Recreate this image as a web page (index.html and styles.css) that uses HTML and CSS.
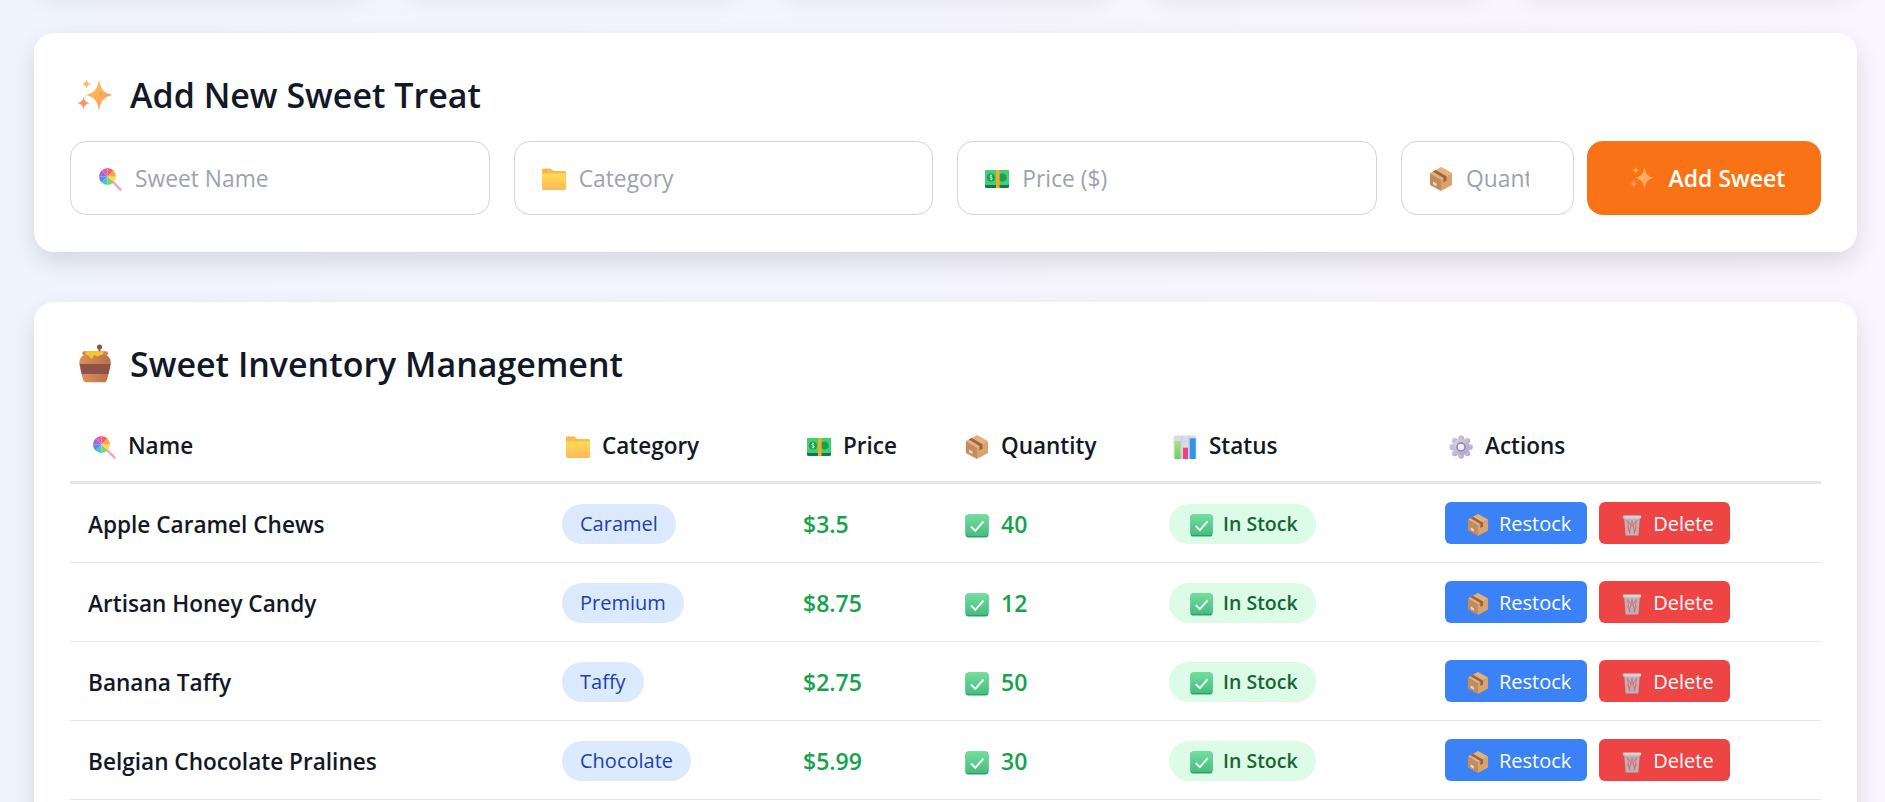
FILE: index.html
```html
<!DOCTYPE html>
<html>
<head>
    <title>Sweet Shop Admin</title>
    <link rel="stylesheet" href="styles.css">
</head>
<body>
    <svg class="sprite" aria-hidden="true">
        <defs>
            <linearGradient id="gSpark" x1="0" y1="0" x2="1" y2="1">
                <stop offset="0" stop-color="#ffcb4f"/>
                <stop offset="1" stop-color="#ff8f63"/>
            </linearGradient>
            <linearGradient id="gFolder" x1="0" y1="0" x2="0" y2="1">
                <stop offset="0" stop-color="#ffdd55"/>
                <stop offset="1" stop-color="#ffb957"/>
            </linearGradient>
            <linearGradient id="gPot" x1="0" y1="0" x2="1" y2="0">
                <stop offset="0" stop-color="#dd9058"/>
                <stop offset="1" stop-color="#b9704c"/>
            </linearGradient>
            <linearGradient id="gCheck" x1="0" y1="0" x2="0" y2="1">
                <stop offset="0" stop-color="#72de9e"/>
                <stop offset="1" stop-color="#45bd80"/>
            </linearGradient>
            <linearGradient id="gGear" x1="0" y1="0" x2="1" y2="1">
                <stop offset="0" stop-color="#dcd6e6"/>
                <stop offset="1" stop-color="#ab9fc6"/>
            </linearGradient>
            <linearGradient id="gBarGreen" x1="0" y1="0" x2="0" y2="1">
                <stop offset="0" stop-color="#a5e58a"/>
                <stop offset="1" stop-color="#6fcf5c"/>
            </linearGradient>
        </defs>
        <symbol id="i-spark" viewBox="0 0 24 24">
            <path fill="url(#gSpark)" d="M15 2.400C15.800 8 17.500 10.800 23 12 17.500 13.200 15.800 16 15 21.600 14.200 16 12.500 13.200 7 12 12.500 10.800 14.200 8 15 2.400z"/>
            <path fill="#fdbb55" d="M7.500 2.400C7.800 4.300 8.400 5 10.500 5.400 8.400 5.800 7.800 6.500 7.500 8.400 7.200 6.500 6.600 5.800 4.500 5.400 6.600 5 7.200 4.300 7.500 2.400z"/>
            <path fill="#ff9468" d="M5.700 12.600C6 15 6.800 16.100 9.300 16.800 6.800 17.500 6 18.600 5.700 21 5.400 18.600 4.600 17.500 2.100 16.800 4.600 16.100 5.400 15 5.700 12.600z"/>
        </symbol>
        <symbol id="i-lolly" viewBox="0 0 24 24">
            <path d="M14 14l8.500 8.500" stroke="#f4a6d0" stroke-width="2.600" stroke-linecap="round"/>
            <path fill="#ffd84d" d="M9.500 9.500L18 9.500A8.500 8.500 0 0 1 15.500 15.500z"/>
            <path fill="#7bd66c" d="M9.500 9.500L15.500 15.500A8.500 8.500 0 0 1 9.500 18z"/>
            <path fill="#4fc4c9" d="M9.500 9.500L9.500 18A8.500 8.500 0 0 1 3.500 15.500z"/>
            <path fill="#5b8def" d="M9.500 9.500L3.500 15.500A8.500 8.500 0 0 1 1 9.500z"/>
            <path fill="#9a6be0" d="M9.500 9.500L1 9.500A8.500 8.500 0 0 1 3.500 3.500z"/>
            <path fill="#e85fb0" d="M9.500 9.500L3.500 3.500A8.500 8.500 0 0 1 9.500 1z"/>
            <path fill="#f2616a" d="M9.500 9.500L9.500 1A8.500 8.500 0 0 1 15.500 3.500z"/>
            <path fill="#ffa24d" d="M9.500 9.500L15.500 3.500A8.500 8.500 0 0 1 18 9.500z"/>
        </symbol>
        <symbol id="i-folder" viewBox="0 0 24 24">
            <path fill="#ffb64a" d="M0 3C0 2 .7 1.500 1.500 1.500h6.300c.5 0 .9.200 1.200.5L11 4h11.500c.8 0 1.500.7 1.500 1.500V10H0z"/>
            <path fill="url(#gFolder)" d="M0 6.500h24v15c0 .8-.7 1.500-1.500 1.500h-21C.7 23 0 22.300 0 21.500z"/>
        </symbol>
        <symbol id="i-money" viewBox="0 0 24 24">
            <rect x="0" y="3" width="24" height="18" rx="1.500" fill="#117a4b"/>
            <rect x="0" y="3" width="24" height="15" rx="1.500" fill="#3fd06f"/>
            <circle cx="6" cy="10.500" r="4" fill="#1f9d55"/>
            <path d="M7.200 8.800C6.200 8 4.900 8.500 5 9.500c.1 1.200 2.300.8 2.300 2 0 1-1.300 1.400-2.400.6M6.100 7.500v6" fill="none" stroke="#d9f7df" stroke-width=".8"/>
            <circle cx="17.500" cy="10.500" r="4" fill="#1f9d55"/>
            <rect x="11" y="3" width="3.600" height="18" fill="#f7a928"/>
        </symbol>
        <symbol id="i-box" viewBox="0 0 24 24">
            <path fill="#e3b27c" d="M12 0l11 6-11 6.500L1 6z"/>
            <path fill="#c58a5e" d="M1 6l11 6.500V24L1 18z"/>
            <path fill="#d8a36e" d="M23 6V18L12 24V12.500z"/>
            <path fill="#9c6340" d="M6.500 3L17.500 9.200v4.500l-3 1.700V11L3.800 4.500z"/>
            <path fill="#e7dccd" d="M4 14.500l3.500 2v2.800L4 17.300z"/>
        </symbol>
        <symbol id="i-honey" viewBox="0 0 24 24">
            <path d="M15.300 2v4" stroke="#8a5236" stroke-width="1.200"/>
            <circle cx="15.300" cy="1.800" r="1.500" fill="#8a5236"/>
            <path fill="url(#gPot)" d="M6 6.500C3.500 8 3 10.500 3.300 12 3.700 15 5 20 5.800 22.200 6 22.700 6.300 22.900 6.800 22.900H18.500C19 22.900 19.300 22.700 19.500 22.200 20.300 20 21.600 15 22 12 22.300 10.500 21.800 8 19.300 6.500z"/>
            <path fill="#8f5149" d="M3.400 12H21.900C21.600 14 21 16 20.600 18H4.700C4.300 16 3.700 14 3.400 12z"/>
            <rect x="5" y="4.300" width="15.400" height="2.300" rx="1" fill="#cf8552"/>
            <path fill="#f7c32e" d="M8 4.400H16.500C17.200 4.400 17.700 4.900 17.700 5.400 17.700 6.300 16.700 6.600 16 6.600 15.300 6.600 15 7.500 14.300 7.500 13.400 7.500 13.100 6.700 12.300 6.800 11.500 6.900 11.600 8.700 10.400 8.700 9.300 8.700 9.300 7.100 8.200 6.800 7.300 6.600 6.800 6.200 6.800 5.500 6.800 4.900 7.300 4.400 8 4.400z"/>
        </symbol>
        <symbol id="i-chart" viewBox="0 0 24 24">
            <rect x="0.500" y="0.500" width="23" height="23.500" rx="2" fill="#dcdae4"/>
            <path d="M8.600 .5V24M15.800 .5V24M.5 7H23.500" stroke="#c9c6d4" stroke-width=".6"/>
            <rect x="1.700" y="6" width="6" height="18" rx=".5" fill="url(#gBarGreen)"/>
            <rect x="10" y="12.700" width="5" height="11.300" fill="#ef3f8a"/>
            <rect x="16.700" y="3.300" width="6" height="20.700" rx=".5" fill="#2f96e8"/>
        </symbol>
        <symbol id="i-gear" viewBox="0 0 24 24">
            <g fill="url(#gGear)">
                <circle cx="12" cy="3.200" r="3"/>
                <circle cx="18.200" cy="5.800" r="3"/>
                <circle cx="20.800" cy="12" r="3"/>
                <circle cx="18.200" cy="18.200" r="3"/>
                <circle cx="12" cy="20.800" r="3"/>
                <circle cx="5.800" cy="18.200" r="3"/>
                <circle cx="3.200" cy="12" r="3"/>
                <circle cx="5.800" cy="5.800" r="3"/>
                <circle cx="12" cy="12" r="8.500"/>
            </g>
            <circle cx="12" cy="12" r="4" fill="#f1eef6" stroke="#8e80ad" stroke-width="1.500"/>
        </symbol>
        <symbol id="i-check" viewBox="0 0 24 24">
            <rect x="0.500" y="0.500" width="23" height="23" rx="3" fill="#2f9f68"/>
            <rect x="0.500" y="0.500" width="23" height="21.500" rx="3" fill="url(#gCheck)"/>
            <path d="M6 12.500l4.300 4.300L18.500 7.500" fill="none" stroke="#f4fbf6" stroke-width="2"/>
        </symbol>
        <symbol id="i-trash" viewBox="0 0 24 24">
            <path fill="#b5b5ba" d="M3.500 4h17l-1.500 18.500c0 .5-.5 1-1 1H6c-.5 0-1-.5-1-1z"/>
            <path fill="none" stroke="#e5626a" stroke-width=".9" d="M7 7l2.500 14M12 7l-3 14M12 7l3 14M17 7l-2.500 14M7 7l5 7M17 7l-5 7M7 14l3 7M17 14l-3 7"/>
            <rect x="2" y="1.500" width="20" height="3.500" rx="1.200" fill="#d4d4d8"/>
        </symbol>
    </svg>

    <div class="page">
        <!-- stat cards sit above the visible part -->
        <div class="stats">
            <div class="stat"></div>
            <div class="stat"></div>
            <div class="stat"></div>
            <div class="stat"></div>
            <div class="stat"></div>
        </div>

        <section class="card add-card">
            <h2 class="card-title"><svg class="title-icon"><use href="#i-spark"/></svg>Add New Sweet Treat</h2>
            <form class="add-form">
                <div class="field grow">
                    <svg class="field-icon"><use href="#i-lolly"/></svg>
                    <input type="text" placeholder="Sweet Name">
                </div>
                <div class="field grow">
                    <svg class="field-icon"><use href="#i-folder"/></svg>
                    <input type="text" placeholder="Category">
                </div>
                <div class="field grow">
                    <svg class="field-icon"><use href="#i-money"/></svg>
                    <input type="text" placeholder="Price ($)">
                </div>
                <div class="field small">
                    <svg class="field-icon"><use href="#i-box"/></svg>
                    <input type="text" placeholder="Quantity">
                </div>
                <button type="button" class="add-btn"><svg class="btn-icon"><use href="#i-spark"/></svg>Add Sweet</button>
            </form>
        </section>

        <section class="card">
            <h2 class="card-title"><svg class="title-icon"><use href="#i-honey"/></svg>Sweet Inventory Management</h2>
            <table class="inventory">
                <colgroup>
                    <col class="c-name"><col class="c-cat"><col class="c-price"><col class="c-qty"><col class="c-status"><col class="c-act">
                </colgroup>
                <thead>
                    <tr>
                        <th><svg class="th-icon"><use href="#i-lolly"/></svg>Name</th>
                        <th><svg class="th-icon"><use href="#i-folder"/></svg>Category</th>
                        <th><svg class="th-icon"><use href="#i-money"/></svg>Price</th>
                        <th class="th-qty"><svg class="th-icon"><use href="#i-box"/></svg>Quantity</th>
                        <th><svg class="th-icon"><use href="#i-chart"/></svg>Status</th>
                        <th><svg class="th-icon"><use href="#i-gear"/></svg>Actions</th>
                    </tr>
                </thead>
                <tbody>
                    <tr>
                        <td class="name">Apple Caramel Chews</td>
                        <td><span class="tag">Caramel</span></td>
                        <td class="price">$3.5</td>
                        <td class="qty"><svg class="th-icon"><use href="#i-check"/></svg>40</td>
                        <td><span class="stock"><svg class="stock-icon"><use href="#i-check"/></svg>In Stock</span></td>
                        <td class="actions">
                            <button type="button" class="btn restock"><svg class="btn-small-icon"><use href="#i-box"/></svg>Restock</button>
                            <button type="button" class="btn delete"><svg class="btn-small-icon"><use href="#i-trash"/></svg>Delete</button>
                        </td>
                    </tr>
                    <tr>
                        <td class="name">Artisan Honey Candy</td>
                        <td><span class="tag">Premium</span></td>
                        <td class="price">$8.75</td>
                        <td class="qty"><svg class="th-icon"><use href="#i-check"/></svg>12</td>
                        <td><span class="stock"><svg class="stock-icon"><use href="#i-check"/></svg>In Stock</span></td>
                        <td class="actions">
                            <button type="button" class="btn restock"><svg class="btn-small-icon"><use href="#i-box"/></svg>Restock</button>
                            <button type="button" class="btn delete"><svg class="btn-small-icon"><use href="#i-trash"/></svg>Delete</button>
                        </td>
                    </tr>
                    <tr>
                        <td class="name">Banana Taffy</td>
                        <td><span class="tag">Taffy</span></td>
                        <td class="price">$2.75</td>
                        <td class="qty"><svg class="th-icon"><use href="#i-check"/></svg>50</td>
                        <td><span class="stock"><svg class="stock-icon"><use href="#i-check"/></svg>In Stock</span></td>
                        <td class="actions">
                            <button type="button" class="btn restock"><svg class="btn-small-icon"><use href="#i-box"/></svg>Restock</button>
                            <button type="button" class="btn delete"><svg class="btn-small-icon"><use href="#i-trash"/></svg>Delete</button>
                        </td>
                    </tr>
                    <tr>
                        <td class="name">Belgian Chocolate Pralines</td>
                        <td><span class="tag">Chocolate</span></td>
                        <td class="price">$5.99</td>
                        <td class="qty"><svg class="th-icon"><use href="#i-check"/></svg>30</td>
                        <td><span class="stock"><svg class="stock-icon"><use href="#i-check"/></svg>In Stock</span></td>
                        <td class="actions">
                            <button type="button" class="btn restock"><svg class="btn-small-icon"><use href="#i-box"/></svg>Restock</button>
                            <button type="button" class="btn delete"><svg class="btn-small-icon"><use href="#i-trash"/></svg>Delete</button>
                        </td>
                    </tr>
                </tbody>
            </table>
        </section>
    </div>
</body>
</html>
```

FILE: styles.css
```css
html, body {
    margin: 0;
    height: 802px;
    overflow: hidden;
}
body {
    font-family: "Open Sans", "Noto Sans", sans-serif;
    color: #111827;
    background: linear-gradient(90deg, #f0f4fe, #faf5fe);
}
.sprite {
    display: block;
    width: 0;
    height: 0;
    overflow: hidden;
}
.page {
    padding: 0 28px 0 34px;
    margin-top: -100px;
}
.stats {
    display: grid;
    grid-template-columns: repeat(5, 1fr);
    gap: 36px;
    height: 95px;
    margin-bottom: 38px;
}
.stat {
    background: #fff;
    border-radius: 16px;
    box-shadow: 0 10px 25px -5px rgba(0, 0, 0, 0.08);
}
.card {
    background: #fff;
    border-radius: 20px;
    padding: 36px;
    margin-bottom: 50px;
    box-shadow: 0 10px 25px rgba(0, 0, 0, 0.12);
}
.add-card {
    height: 219px;
    box-sizing: border-box;
}
.card-title {
    display: flex;
    align-items: center;
    margin: 0;
    font-size: 34px;
    font-weight: 600;
    line-height: 52px;
}
.title-icon {
    width: 40px;
    height: 40px;
    margin: 0 16px 0 4px;
}
.add-form {
    display: flex;
    margin-top: 20px;
}
.field {
    position: relative;
    margin-right: 24px;
}
.field.grow {
    flex: 1;
}
.field.small {
    width: 173px;
    margin-right: 13px;
}
.field-icon {
    position: absolute;
    left: 28px;
    top: 26px;
    width: 24px;
    height: 24px;
}
.field input {
    display: block;
    box-sizing: border-box;
    width: 100%;
    height: 74px;
    padding: 1px 44px 0 64px;
    border: 1px solid #d1d5db;
    border-radius: 16px;
    background: #fff;
    font-family: inherit;
    font-size: 22.800px;
}
.field input::placeholder {
    color: #9ca3af;
}
.add-btn {
    display: flex;
    align-items: center;
    justify-content: center;
    width: 234px;
    height: 74px;
    padding: 0 0 0 4px;
    border: none;
    border-radius: 16px;
    background: #f97316;
    color: #fff;
    font-family: inherit;
    font-size: 23px;
    font-weight: 600;
}
.btn-icon {
    width: 28px;
    height: 28px;
    margin-right: 14px;
}
.inventory {
    width: 100%;
    border-collapse: collapse;
    table-layout: fixed;
    margin-top: 19px;
}
.c-name { width: 474px; }
.c-cat { width: 241px; }
.c-price { width: 162px; }
.c-qty { width: 204px; }
.c-status { width: 276px; }
.inventory th {
    height: 72px;
    padding: 0 18px 0 22px;
    border-bottom: 3px solid #e5e7eb;
    text-align: left;
    font-size: 22.500px;
    font-weight: 600;
}
.inventory th.th-qty {
    padding-left: 18px;
}
.inventory td {
    height: 76px;
    padding: 2px 18px 0;
    border-bottom: 1px solid #e5e7eb;
    font-size: 22.600px;
}
.inventory td.actions {
    padding-top: 0;
    height: 78px;
}
.th-icon {
    width: 24px;
    height: 24px;
    margin-right: 12px;
    vertical-align: -5px;
}
.name {
    font-weight: 600;
}
.tag {
    display: inline-block;
    padding: 0 18px;
    line-height: 40px;
    border-radius: 20px;
    background: #dbeafe;
    color: #1e40af;
    font-size: 20px;
}
.inventory td.price, .inventory td.qty {
    color: #16a34a;
    font-size: 23px;
    font-weight: 600;
}
.stock {
    display: inline-block;
    padding: 0 18px 0 21px;
    line-height: 40px;
    border-radius: 20px;
    background: #dcfce7;
    color: #166534;
    font-size: 19.500px;
    font-weight: 600;
}
.stock-icon {
    width: 23px;
    height: 23px;
    margin-right: 10px;
    vertical-align: -6px;
}
.btn {
    height: 42px;
    padding: 0 16px 0 22px;
    margin-right: 6px;
    border: none;
    border-radius: 6px;
    color: #fff;
    font-family: inherit;
    font-size: 20px;
}
.restock {
    background: #3b82f6;
}
.delete {
    background: #ef4444;
}
.btn-small-icon {
    width: 22px;
    height: 24px;
    margin-right: 10px;
    vertical-align: -6px;
}
```
